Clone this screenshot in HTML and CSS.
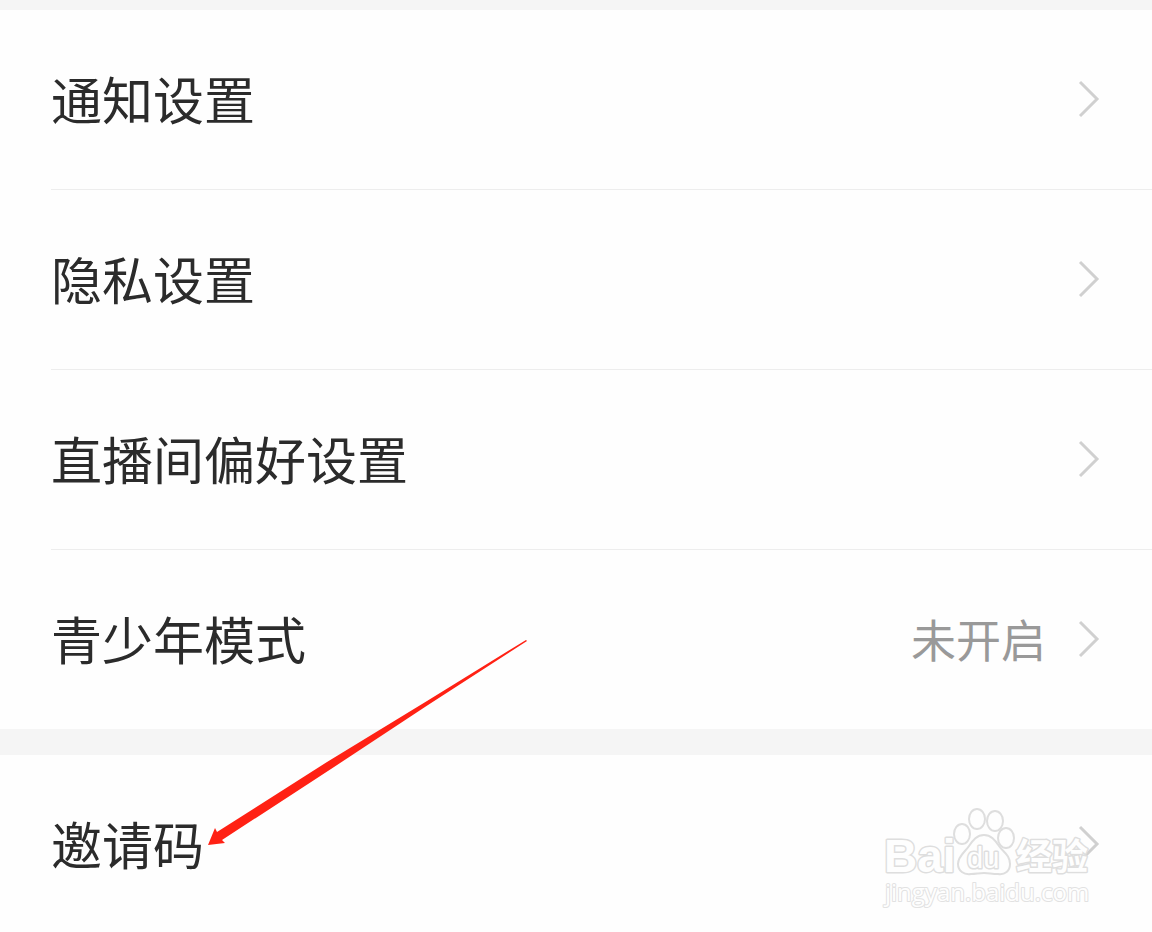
FILE: index.html
```html
<!DOCTYPE html>
<html lang="zh-CN">
  <head>
    <meta charset="UTF-8" />
    <meta name="viewport" content="width=device-width, initial-scale=1.0" />
    <title>设置</title>
    <link rel="stylesheet" href="styles.css">
  </head>
  <body>
    <svg class="sprite" aria-hidden="true">
      <symbol id="chevron" viewBox="0 0 24 40">
        <path d="M3 3 L20 20 L3 37" fill="none" stroke="currentColor" stroke-width="3" />
      </symbol>
    </svg>

    <main class="settings">
      <ul class="group">
        <li>
          <a class="row" href="#notice">
            <span class="label">通知设置</span>
            <svg class="chevron"><use href="#chevron" /></svg>
          </a>
        </li>
        <li>
          <a class="row" href="#privacy">
            <span class="label">隐私设置</span>
            <svg class="chevron"><use href="#chevron" /></svg>
          </a>
        </li>
        <li>
          <a class="row" href="#live">
            <span class="label">直播间偏好设置</span>
            <svg class="chevron"><use href="#chevron" /></svg>
          </a>
        </li>
        <li>
          <a class="row" href="#teen">
            <span class="label">青少年模式</span>
            <span class="value">未开启</span>
            <svg class="chevron"><use href="#chevron" /></svg>
          </a>
        </li>
      </ul>

      <ul class="group group-last">
        <li>
          <a class="row" href="#invite">
            <span class="label">邀请码</span>
            <svg class="chevron"><use href="#chevron" /></svg>
          </a>

          <!-- pointer to the invite code row -->
          <svg class="arrow" viewBox="0 0 320 207" aria-hidden="true">
            <path d="M1 206 L8 189 L10 193 L120 123 L220 62 L319 1 L320 2 L221 66 L124 130 L15 201 L18 204 Z" />
          </svg>

          <svg class="watermark" viewBox="0 0 240 125" role="img" aria-label="Baidu 经验">
            <text class="wm-logo" x="14" y="77">Bai</text>
            <ellipse cx="92" cy="39" rx="8" ry="10" />
            <ellipse cx="107" cy="24" rx="8" ry="10" />
            <ellipse cx="125" cy="26" rx="8" ry="10" />
            <ellipse cx="136" cy="43" rx="8" ry="10" />
            <path d="M114 40 C121 40 125 45 129 51 C133 57 140 60 140 69 C140 76 135 80 128 79 C122 79 119 78 114 78 C109 78 106 79 101 79 C94 80 88 76 88 69 C88 61 95 57 99 51 C103 45 107 40 114 40 Z" />
            <text class="wm-du" x="97" y="73">du</text>
            <text class="wm-cn" x="146" y="75">经验</text>
            <text class="wm-url" x="15" y="106">jingyan.baidu.com</text>
          </svg>
        </li>
      </ul>
    </main>
  </body>
</html>
```
FILE: styles.css
```css
* {
  box-sizing: border-box;
}
body {
  margin: 0;
  font-family: "Noto Sans CJK SC", sans-serif;
  color: #2b2b2b;
  background-color: #fefefe;
}
.sprite {
  display: none;
}
.settings {
  border-top: 10px solid #f5f5f5;
}
.group {
  position: relative;
  margin: 0;
  padding: 0 0 0 51px;
  list-style: none;
}
.group li + li {
  border-top: 1px solid #ededed;
}
.group-last {
  border-top: 26px solid #f5f5f5;
}
.row {
  display: flex;
  align-items: center;
  padding: 51px 51px 53px 0;
  line-height: 75px;
  color: inherit;
  text-decoration: none;
}
.group-last .row {
  padding-bottom: 51px;
}
.label {
  flex: 1;
  font-size: 51px;
}
.value {
  margin-right: 31px;
  font-size: 45px;
  color: #999;
}
.chevron {
  width: 24px;
  height: 40px;
  color: #d0d0d0;
}
.arrow {
  position: absolute;
  left: 207px;
  bottom: 86px;
  width: 320px;
  height: 207px;
  fill: #ff2114;
  pointer-events: none;
}
.watermark {
  position: absolute;
  right: 42px;
  bottom: 12px;
  width: 240px;
  height: 125px;
  fill: #fefefe;
  stroke: #dedede;
  stroke-width: 2px;
  pointer-events: none;
}
.watermark text {
  stroke-width: 3px;
  stroke-linejoin: round;
  paint-order: stroke;
}
.wm-logo {
  font: bold 46px "Liberation Sans", sans-serif;
}
.watermark .wm-du {
  stroke-width: 3px;
  font: 29px "Liberation Sans", sans-serif;
}
.wm-cn {
  font: bold 36px "Noto Sans CJK SC", sans-serif;
}
.watermark .wm-url {
  stroke: #e2e2e2;
  stroke-width: 2px;
  font: 24px "Open Sans", sans-serif;
}
```
